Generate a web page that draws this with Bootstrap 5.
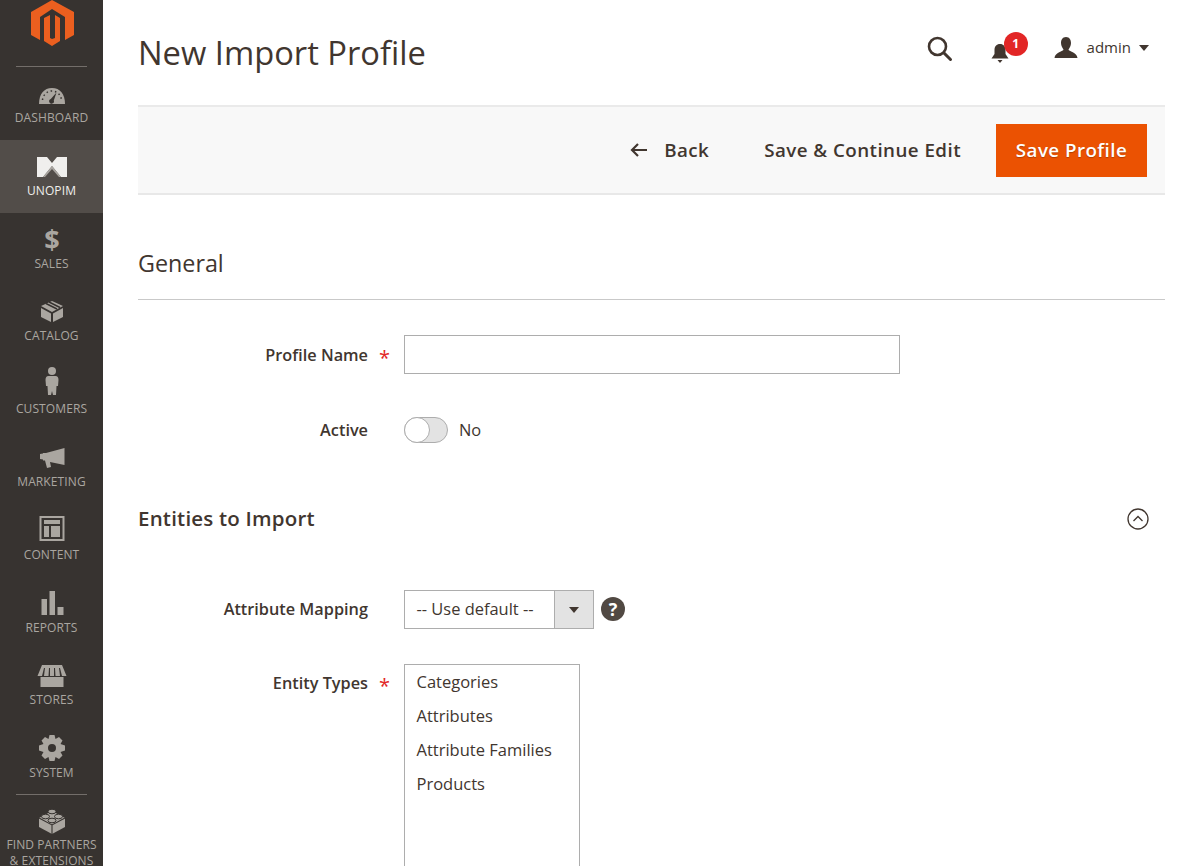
<!DOCTYPE html>
<html lang="en">
<head>
    <meta charset="UTF-8">
    <meta name="viewport" content="width=device-width, initial-scale=1.0">
    <title>New Import Profile</title>
    <link href="https://cdn.jsdelivr.net/npm/bootstrap@5.3.0/dist/css/bootstrap.min.css" rel="stylesheet">
    <style>
        html, body { height: 866px; overflow: hidden; }
        body { font-family: "Open Sans", sans-serif; color: #41362f; background: #fff; }

        /* sidebar */
        .side-menu { width: 103px; height: 866px; background: #373330; flex-shrink: 0; overflow: hidden; }
        .side-logo { height: 67px; margin: 0 16px; border-bottom: 1px solid #736e6a; text-align: center; }
        .side-logo svg { display: block; margin: 0 auto; }
        .side-item { height: 72.8px; padding-top: 13px; color: #aaa6a0; font-size: 12px; line-height: 16px; letter-spacing: .1px; text-align: center; white-space: nowrap; }
        .side-item svg { display: block; margin: 0 auto 4px; height: 26px; width: 30px; overflow: visible; }
        .side-item.is-active { background: #524d49; color: #f0efed; }
        .side-rule { margin: -1px 16px 0; border-top: 1px solid #736e6a; }
        .side-last { padding-top: 13px; }
        .side-last svg { margin-bottom: 3px; }

        /* page */
        .page-wrap { padding: 0 35px; width: 1097px; }
        .page-top { height: 105px; }
        .page-title { font-size: 32.7px; font-weight: 400; line-height: 44px; margin: 31px 0 0; color: #41362f; }
        .top-tools { padding: 36px 16px 0 0; }
        .bell-wrap { width: 20px; height: 20px; margin: 0 43px 0 38px; }
        .bell-badge { top: -7px; left: 13px; width: 24px; height: 24px; border-radius: 50%; background: #e22626; color: #fff; font-size: 12px; font-weight: 700; line-height: 24px; text-align: center; }
        .user-icon { margin: 0 9px 3px 0; }
        .admin-name { font-size: 15px; color: #41362f; margin-bottom: 4px; }
        .admin-caret { width: 0; height: 0; border-left: 5px solid transparent; border-right: 5px solid transparent; border-top: 6px solid #41362f; margin: 0 0 3px 8px; }

        .action-bar { height: 90px; background: #f8f8f8; border-top: 2px solid #eaeaea; border-bottom: 2px solid #e8e8e8; padding-right: 18px; }
        .action-link { font-size: 18.75px; font-weight: 600; letter-spacing: .45px; color: #41362f; }
        .link-save { margin-left: 55px; }
        .save-btn { width: 151px; height: 53px; margin-left: 35px; background: #eb5202; border-radius: 0; border: 0; color: #fff; font-size: 18.75px; font-weight: 600; letter-spacing: .45px; text-shadow: 0 1px 1px rgba(0,0,0,.25); padding: 0; }

        .block-title { font-size: 23.3px; font-weight: 400; line-height: 32px; margin: 52px 0 0; padding-bottom: 20px; border-bottom: 1px solid #c9c9c9; }
        .sub-title { font-size: 20.5px; font-weight: 600; line-height: 28px; letter-spacing: .2px; margin: 0; }
        .sub-head { margin-top: 61px; padding-right: 16px; }
        .sub-head svg { margin-top: 2px; }

        .form-line { display: flex; align-items: center; }
        .line-name { margin-top: 35px; }
        .line-name .line-label { padding-top: 2px; }
        .line-name .line-star { padding-top: 6px; }
        .line-active { margin-top: 43px; }
        .line-mapping { margin-top: 58px; }
        .line-types { margin-top: 35px; align-items: flex-start; }
        .line-types .line-label { padding-top: 7px; }
        .line-types .line-star { padding-top: 12px; }
        .line-label { width: 230px; text-align: right; font-size: 16.3px; font-weight: 600; color: #41362f; }
        .line-star { width: 36px; padding-left: 11px; color: #e22626; font-size: 20px; line-height: 1; font-weight: 400; padding-top: 4px; }
        .text-box { width: 496px; height: 39px; border: 1px solid #adadad; border-radius: 0; background: #fff; }
        .toggle-track { width: 44px; height: 26px; border: 1px solid #adadad; border-radius: 13px; background: #e3e3e3; position: relative; }
        .toggle-knob { position: absolute; left: -1px; top: -1px; width: 26px; height: 26px; border: 1px solid #adadad; border-radius: 50%; background: #fff; }
        .toggle-text { font-size: 16.4px; margin-left: 11px; }
        .select-box { width: 190px; height: 39px; border: 1px solid #adadad; background: #fff; font-size: 16.45px; }
        .select-text { flex: 1; padding-left: 11.5px; line-height: 36px; }
        .select-arrow { width: 39px; height: 37px; background: #e3e3e3; border-left: 1px solid #adadad; display: flex; align-items: center; justify-content: center; }
        .select-arrow span { width: 0; height: 0; border-left: 5px solid transparent; border-right: 5px solid transparent; border-top: 6px solid #41362f; }
        .help-dot { width: 24px; height: 24px; border-radius: 50%; background: #514943; color: #fff; font-size: 18px; font-weight: 700; line-height: 24px; text-align: center; margin: 0 0 2px 7px; }
        .multi-box { width: 176px; height: 240px; border: 1px solid #adadad; padding: 0 11.5px; font-size: 16.5px; line-height: 34px; }
    </style>
</head>
<body>
    <div class="d-flex">
        <!-- sidebar -->
        <div class="side-menu">
            <div class="side-logo">
                <svg width="44" height="47" viewBox="0 0 44 47"><path fill="#eb5f1f" d="M22 0 44 12V35L35 40V17L22 9 10 17V40L1 35V12Z"/><path fill="#eb5f1f" d="M14 18 20 15V38L22 39 25 38V15L30 18V41L22 46 14 41Z"/></svg>
            </div>
            <div class="side-item">
                <svg viewBox="0 0 30 26"><path fill="#aaa6a0" d="M2 24C2 14 7 8 15 8s13 6 13 16Z"/><path fill="none" stroke="#373330" stroke-width="1.500" stroke-dasharray="1.500 2.800" d="M5.500 20C6 15 10 11 15 11s9 4 9.500 9"/><path fill="#373330" d="M19.500 12.500 16.800 20.500a2.400 2.400 0 1 1-3-1.500Z"/></svg>
                DASHBOARD
            </div>
            <div class="side-item is-active">
                <svg viewBox="0 0 30 26"><path fill="#f0efed" d="M0 4H10L15 10 20 4H30V24H24L15 13 6 24H0Z"/><path fill="#a9a5a0" d="M6 24 15 13 24 24H22L15 16 8 24Z"/></svg>
                UNOPIM
            </div>
            <div class="side-item">
                <svg viewBox="0 0 30 26"><text x="15" y="23" text-anchor="middle" fill="#aaa6a0" font-family="Open Sans" font-size="27" font-weight="700">$</text></svg>
                SALES
            </div>
            <div class="side-item">
                <svg viewBox="0 0 30 26"><path fill="#aaa6a0" d="M15 3 26 8 15 14 4 8ZM4 10 14 15.500V24L4 19ZM16 15.500 26 10V19L16 24Z"/><path stroke="#373330" stroke-width="1.500" d="M9 5.500 20 11M12 4 23 9.500"/></svg>
                CATALOG
            </div>
            <div class="side-item">
                <svg viewBox="0 0 30 26"><circle cx="15" cy="0" r="4" fill="#aaa6a0"/><path fill="#aaa6a0" d="M11.500 5H18.500C20.500 5 21.500 6.500 21.500 9L21 15H19.500L19 24H16L15 20 14 24H11L10.500 15H9L8.500 9C8.500 6.500 9.500 5 11.500 5Z"/></svg>
                CUSTOMERS
            </div>
            <div class="side-item">
                <svg viewBox="0 0 30 26"><path fill="#aaa6a0" d="M27.500 4V21L13 18 14 23 10 24 8 16.500H6V15.500L3 15V10L6 9.500V9H9Z"/></svg>
                MARKETING
            </div>
            <div class="side-item">
                <svg viewBox="0 0 30 26"><path fill="#aaa6a0" fill-rule="evenodd" d="M2.500 -1H27.500V24H2.500ZM4.500 1V22H25.500V1ZM7 3H23V7H7ZM7 9H12V20H7ZM14 9H23V20H14Z"/></svg>
                CONTENT
            </div>
            <div class="side-item">
                <svg viewBox="0 0 30 26"><path fill="#aaa6a0" d="M4.500 9H10V25H4.500ZM12.500 1H18V25H12.500ZM20.500 17H26.500V25H20.500Z"/></svg>
                REPORTS
            </div>
            <div class="side-item">
                <svg viewBox="0 0 30 26"><path fill="#aaa6a0" d="M5 3H25L29.500 14H25L23 6H22L23 14H18.500L18 6H17V14H13V6H12L11.500 14H7L8 6H7L5 14H.500Z"/><path fill="#aaa6a0" d="M3.500 15H26.500V25H3.500Z"/></svg>
                STORES
            </div>
            <div class="side-item">
                <svg viewBox="0 0 30 26"><path fill="#aaa6a0" fill-rule="evenodd" d="M12.500 0H17.500L18.500 4 22 2 25.500 5.500 23.500 9 28 10.500V15.500L23.500 17 25.500 20.500 22 24 18.500 22 17.500 26H12.500L11.500 22 8 24 4.500 20.500 6.500 17 2 15.500V10.500L6.500 9 4.500 5.500 8 2 11.500 4ZM15 9A4 4 0 1 0 15 17 4 4 0 0 0 15 9Z"/></svg>
                SYSTEM
            </div>
            <div class="side-rule"></div>
            <div class="side-item side-last">
                <svg viewBox="0 0 30 26"><path fill="#aaa6a0" d="M15 3 28 10V19L15 26 2 19V10Z"/><path fill="none" stroke="#373330" stroke-width="1.100" d="M2 10 15 17 28 10M15 17V26"/><g fill="#aaa6a0" stroke="#373330" stroke-width="1"><ellipse cx="15" cy="3.500" rx="4" ry="2.300"/><ellipse cx="8.500" cy="8.500" rx="4" ry="2.300"/><ellipse cx="21.500" cy="8.500" rx="4" ry="2.300"/><ellipse cx="15" cy="12.500" rx="4" ry="2.300"/></g></svg>
                FIND PARTNERS<br>&amp; EXTENSIONS
            </div>
        </div>

        <!-- main content -->
        <div class="page-wrap">
            <div class="page-top d-flex justify-content-between align-items-start">
                <h1 class="page-title">New Import Profile</h1>
                <div class="top-tools d-flex align-items-center">
                    <svg width="26" height="26" viewBox="0 0 26 26"><circle cx="10.500" cy="10.500" r="8.500" fill="none" stroke="#41362f" stroke-width="2.600"/><path stroke="#41362f" stroke-width="3" stroke-linecap="round" d="M17 17 23.500 23.500"/></svg>
                    <div class="bell-wrap position-relative">
                        <svg width="18" height="20" viewBox="0 0 18 20"><path fill="#41362f" d="M9 1C12.500 1 14.500 3.500 14.500 7V11L17.500 15.500H.500L3.500 11V7C3.500 3.500 5.500 1 9 1Z"/><path fill="#41362f" d="M6.500 17H11.500L9 20Z"/></svg>
                        <span class="bell-badge position-absolute">1</span>
                    </div>
                    <svg width="24" height="22" viewBox="0 0 24 22" class="user-icon"><path fill="#41362f" d="M12 0C15.500 0 17 3 17 6S15.500 11 14.500 12.500C14.500 14.500 23 15 23.500 21H.500C1 15 9.500 14.500 9.500 12.500 8.500 11 7 9 7 6S8.500 0 12 0Z"/></svg>
                    <span class="admin-name">admin</span>
                    <span class="admin-caret"></span>
                </div>
            </div>

            <div class="action-bar d-flex align-items-center justify-content-end">
                <a class="action-link d-flex align-items-center text-decoration-none" href="#">
                    <svg width="18" height="14" viewBox="0 0 18 14" class="me-3"><path fill="none" stroke="#41362f" stroke-width="2.200" d="M17 7H2M8 1 2 7 8 13"/></svg>
                    Back
                </a>
                <a class="action-link link-save text-decoration-none" href="#">Save &amp; Continue Edit</a>
                <button class="btn save-btn">Save Profile</button>
            </div>

            <h2 class="block-title">General</h2>

            <div class="form-line line-name">
                <div class="line-label">Profile Name</div>
                <div class="line-star">*</div>
                <div class="text-box"></div>
            </div>
            <div class="form-line line-active">
                <div class="line-label">Active</div>
                <div class="line-star"></div>
                <div class="toggle-track"><div class="toggle-knob"></div></div>
                <div class="toggle-text">No</div>
            </div>

            <div class="sub-head d-flex justify-content-between align-items-center">
                <h3 class="sub-title">Entities to Import</h3>
                <svg width="22" height="22" viewBox="0 0 22 22"><circle cx="11" cy="11" r="10" fill="none" stroke="#41362f" stroke-width="1.300"/><path fill="none" stroke="#41362f" stroke-width="1.300" d="M6.500 13 11 8.500 15.500 13"/></svg>
            </div>

            <div class="form-line line-mapping">
                <div class="line-label">Attribute Mapping</div>
                <div class="line-star"></div>
                <div class="select-box d-flex">
                    <div class="select-text">-- Use default --</div>
                    <div class="select-arrow"><span></span></div>
                </div>
                <div class="help-dot">?</div>
            </div>
            <div class="form-line line-types">
                <div class="line-label">Entity Types</div>
                <div class="line-star">*</div>
                <div class="multi-box">
                    <div>Categories</div>
                    <div>Attributes</div>
                    <div>Attribute Families</div>
                    <div>Products</div>
                </div>
            </div>
        </div>
    </div>
    <script src="https://cdn.jsdelivr.net/npm/bootstrap@5.3.0/dist/js/bootstrap.bundle.min.js"></script>
</body>
</html>
